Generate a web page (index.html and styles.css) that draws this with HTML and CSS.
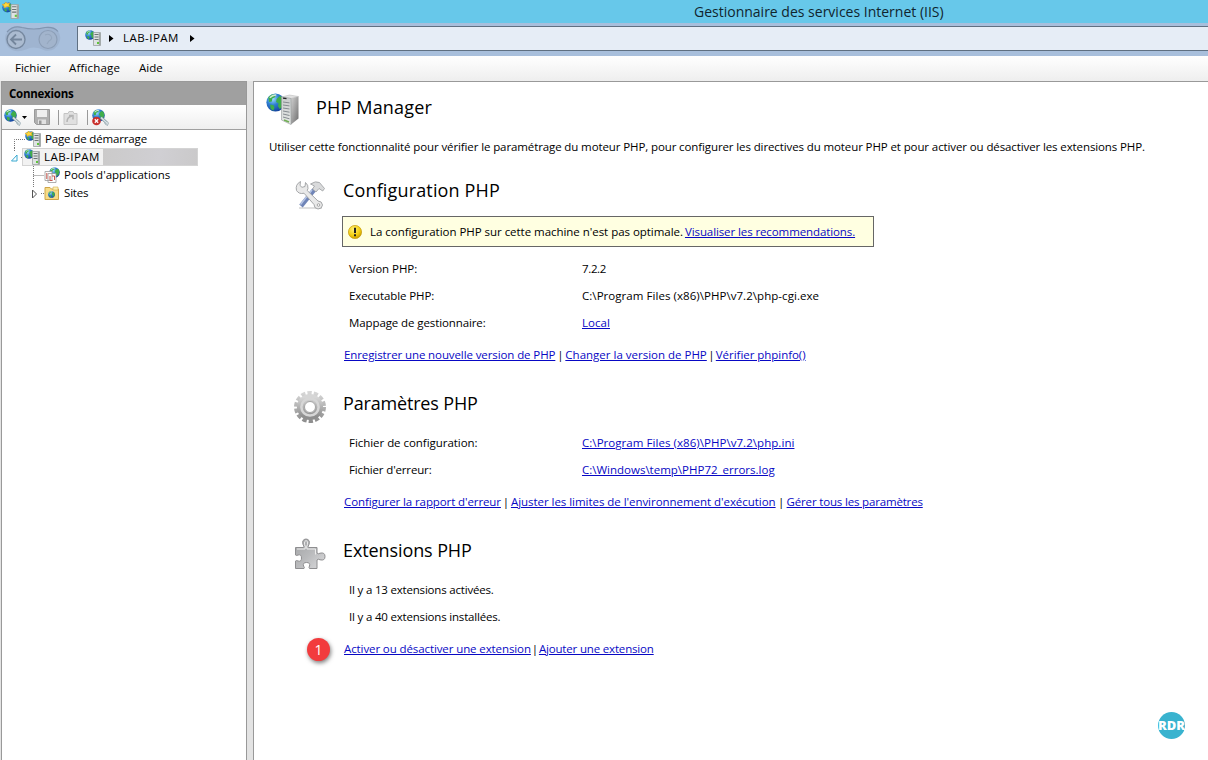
FILE: index.html
```html
<!DOCTYPE html>
<html lang="fr">
<head>
<meta charset="utf-8">
<title>Gestionnaire des services Internet (IIS)</title>
<link rel="stylesheet" href="styles.css">
</head>
<body>
<svg class="defs" width="0" height="0">
  <defs>
    <radialGradient id="globe" cx=".35" cy=".3" r=".75"><stop offset="0" stop-color="#9fe0ff"/><stop offset=".45" stop-color="#2f7fd0"/><stop offset="1" stop-color="#123f9a"/></radialGradient>
    <linearGradient id="front" x1="0" y1="0" x2="0" y2="1"><stop offset="0" stop-color="#c9cccd"/><stop offset="1" stop-color="#e6e8e6"/></linearGradient>
    <linearGradient id="side" x1="0" y1="0" x2="1" y2="1"><stop offset="0" stop-color="#d2d2d2"/><stop offset="1" stop-color="#6c6c6c"/></linearGradient>
    <linearGradient id="gearfill" x1="0" y1="0" x2="0" y2="1"><stop offset="0" stop-color="#d6d6d6"/><stop offset="1" stop-color="#8e8e8e"/></linearGradient>
    <linearGradient id="puzzle" x1="0" y1="0" x2="1" y2="1"><stop offset="0" stop-color="#a2a3a5"/><stop offset=".5" stop-color="#b9babc"/><stop offset="1" stop-color="#dcdcde"/></linearGradient>
    <radialGradient id="gold" cx=".4" cy=".3" r=".8"><stop offset="0" stop-color="#fff27a"/><stop offset=".6" stop-color="#f2cc0c"/><stop offset="1" stop-color="#b78a00"/></radialGradient>
    <symbol id="earth" viewBox="0 0 10 10">
      <circle cx="5" cy="5" r="4.8" fill="url(#globe)"/>
      <path d="M1.200 2.300 3 .8l2.200.1-.5 1.400-1.400.6-.2 1.600-1.500.3zM5.600 3.200l1.600-1.600 1.500.5.8 2-.6 2.600-1.600 1.800-1-1.500.3-1.600-1.300-.7zM2.200 6l1.800.4.5 1.300-.7 1.600-1.400-1.100z" fill="#3fae4a"/>
      <path d="M2 2.500Q3.400.9 5.400 1" stroke="#fff" stroke-width=".8" fill="none" opacity=".75"/>
    </symbol>
    <symbol id="server" viewBox="0 0 16 16">
      <use href="#earth" x="0" y="0" width="10" height="10"/>
      <path d="M8.500 2.500h7v13h-7z" fill="#dfe3e3" stroke="#9aa1a1" stroke-width=".8"/>
      <path d="M13.800 3h1.600v12.300h-1.600z" fill="#9fa5a5"/>
      <path d="M9.500 4.500h4M9.500 7h4M9.500 9.500h4" stroke="#6b7375"/>
      <path d="M12 12h2v2h-2z" fill="#5fc53b"/>
    </symbol>
    <symbol id="serverstar" viewBox="0 0 16 16">
      <use href="#server" width="16" height="16"/>
      <path d="M3.500 0 4.800 1.500 7.500.8 6.400 2.800 7.300 4.500 4.600 4.200 2 5.600 1.900 3.800 0 2.300 2.600 1.800z" fill="#ffd83a" stroke="#e39a1c" stroke-width=".5"/>
    </symbol>
    <symbol id="globeplug" viewBox="0 0 17 17">
      <use href="#earth" x="0" y="0" width="13" height="13"/>
      <path d="M9 8.500 15 14" stroke="#7d959f" stroke-width="3"/>
      <path d="M9 8.500 15 14" stroke="#dbe4e8" stroke-width="1.600"/>
      <path d="M12.500 14.500 15.500 16.500 16.500 13.500" fill="none" stroke="#9dafb6"/>
    </symbol>
  </defs>
</svg>

<header class="titlebar">
  <svg class="app-icon" width="17" height="17" viewBox="0 0 16 16"><use href="#serverstar"/></svg>
  <h1 class="window-title">Gestionnaire des services Internet (IIS)</h1>
</header>

<div class="navbar">
  <svg class="nav-buttons" width="62" height="29" viewBox="0 0 62 29">
    <path d="M6 6Q12-.5 21 2q11 4 22 0 9-1.500 13 4 4 6 1 12-4 9-14 7.500Q32 20 24 24.500 13 29 6 22 0 13 6 6z" fill="#9fb4d0"/>
    <path d="M5 7Q11 0 20 2.500q12 3 23 0 9-1 13 4" fill="none" stroke="#8195b0" stroke-width="1.200"/>
    <circle cx="14" cy="14.500" r="9" fill="#abbbd0" stroke="#76889f" stroke-width="1.400"/>
    <path d="M20 14.500H9.500M14 9.500l-5 5 5 5" fill="none" stroke="#74869c" stroke-width="1.800"/>
    <circle cx="46" cy="14.500" r="9" fill="#a2b4cc" stroke="#8c9eb6" stroke-width="1.200"/>
    <path d="M43 10q4-2 6 1t-2 5l-2 3" fill="none" stroke="#95a7be" stroke-width="1.100"/>
  </svg>
  <div class="address">
    <svg width="16" height="16" viewBox="0 0 16 16"><use href="#server"/></svg>
    <svg class="chev first" width="5" height="7" viewBox="0 0 5 7"><path d="M0 0l4.500 3.500L0 7z"/></svg>
    <span class="crumb wide">LAB-IPAM</span>
    <svg class="chev" width="5" height="7" viewBox="0 0 5 7"><path d="M0 0l4.500 3.500L0 7z"/></svg>
  </div>
</div>

<nav class="menubar">
  <span class="menu-file">Fichier</span><span class="menu-view">Affichage</span><span>Aide</span>
</nav>

<div class="workspace">
  <aside class="connections">
    <h2 class="pane-title">Connexions</h2>
    <div class="toolbar">
      <svg width="17" height="17" viewBox="0 0 17 17"><use href="#globeplug"/></svg>
      <svg class="drop" width="5" height="3" viewBox="0 0 5 3"><path d="M0 0h5L2.500 3z"/></svg>
      <svg class="save" width="16" height="16" viewBox="0 0 16 16"><path d="M.5.5h15v15H2.500l-2-2z" fill="#b0b0b0" stroke="#9a9a9a"/><path d="M3 1h10v7H3z" fill="#efefef"/><path d="M4 10.500h8V15H4z" fill="#e2e2e2"/><path d="M5 11.500h2.500V15H5z" fill="#999"/></svg>
      <i class="sep"></i>
      <svg width="15" height="15" viewBox="0 0 15 15"><path d="M1 3.500h4l1-2h4l1 2h3v11H1z" fill="#e0e0e0" stroke="#c4c4c4"/><path d="M4 12q0-5 5-6M6 5.500h4v4" fill="none" stroke="#b4b4b4" stroke-width="1.500"/></svg>
      <i class="sep second"></i>
      <svg width="17" height="17" viewBox="0 0 17 17"><use href="#globeplug"/><circle cx="4.500" cy="12" r="4.300" fill="#c9302c"/><path d="M2.800 10.300l3.400 3.400M6.200 10.300l-3.400 3.400" stroke="#fff" stroke-width="1.300"/></svg>
    </div>
    <div class="tree">
      <div class="node">
        <svg class="lines" width="23" height="18"><path d="M12.500 18V9.500H23" /></svg>
        <svg width="16" height="16" viewBox="0 0 16 16"><use href="#serverstar"/></svg>
        <span class="snug">Page de démarrage</span>
      </div>
      <div class="node">
        <svg class="lines" width="22" height="18"><path d="M12.500 0v3M19 9.500h3"/><path class="open" d="M15 7v6H9.500z"/></svg>
        <div class="selected">
          <svg width="16" height="16" viewBox="0 0 16 16"><use href="#server"/></svg>
          <span class="wide">LAB-IPAM</span><i class="redacted"></i>
        </div>
      </div>
      <div class="node">
        <svg class="lines" width="42" height="18"><path d="M31.500 0v18M31.500 9.500H42"/></svg>
        <svg width="16" height="16" viewBox="0 0 16 16"><use href="#earth" x="5" y="0" width="11" height="11"/><path d="M1 4.500h7v9H1zM4 6.500h8v9H4z" fill="#fff" stroke="#9a9a9a" stroke-width=".8"/><path d="M2.800 6v6M6 9v4.500h2.500M8 9h2.500v4" fill="none" stroke="#c8564e"/></svg>
        <span>Pools d'applications</span>
      </div>
      <div class="node">
        <svg class="lines" width="42" height="18"><path d="M31.500 0v3M39 9.500h3"/><path class="closed" d="M30.500 6v8l4-4z"/></svg>
        <svg width="16" height="16" viewBox="0 0 16 16"><path d="M1 2.500h5l1.500 1.500H14.500v10.500H1z" fill="#f7dc86" stroke="#cfa548"/><path d="M9 2h5v3H9z" fill="#fff1b0" stroke="#d1ab50" stroke-width=".6"/><use href="#earth" x="4" y="6" width="7" height="7"/></svg>
        <span class="tight">Sites</span>
      </div>
    </div>
  </aside>

  <main class="page">
    <div class="page-head">
      <svg width="34" height="34" viewBox="0 0 34 34">
        <use href="#earth" x="0" y="1" width="19" height="19"/>
        <path d="M25 6l7.500-1.500v22L25 32.500z" fill="url(#side)"/>
        <path d="M15.500 5l8-2 9 1.500L25 6.500z" fill="#e2e2e2" stroke="#b5b5b5" stroke-width=".5"/>
        <path d="M15.500 5l9.500 1.500v26l-9.500-4.500z" fill="url(#front)" stroke="#969a9c" stroke-width=".6"/>
        <path d="M17 6.200l3.500.5" stroke="#222" stroke-width="1.300"/>
        <path d="M17 10l6.500.9M17 13l6.500.9M17 16l6.500 1M17 19l6.500 1.200M17 22l6.500 1.500M17 25l6.500 1.800" stroke="#858b90"/>
        <path d="M18 28l5 2" stroke="#6fae52" stroke-width="1.400"/>
      </svg>
      <h2>PHP Manager</h2>
    </div>
    <p class="intro">Utiliser cette fonctionnalité pour vérifier le paramétrage du moteur PHP, pour configurer les directives du moteur PHP et pour activer ou désactiver les extensions PHP.</p>

    <section class="block">
      <svg class="block-icon" width="32" height="32" viewBox="0 0 32 32">
        <path d="M5 29h23" stroke="#e0e0e0" stroke-width="2"/>
        <path d="M7 27 20 11" stroke="#7085b8" stroke-width="4.500"/>
        <path d="M6.500 25.500 18 11" stroke="#b5c4e4" stroke-width="1.500"/>
        <path d="M16.500 5q5-3.500 9-1.500l5 6-1.800 2.500-3.700-2.500-3 3.500-3.500-3 2-3z" fill="#d9dadb" stroke="#9a9da0" stroke-width=".8"/>
        <path d="M6.500 2.500 6 6.500l2 1.800 3-.8.5-4q3 2.500 2.500 6l-.8 2L24 22q4 0 4.500 4-.5 4-4.500 4-4-.5-4-4.500L10 14.200q-5 1.300-7.500-2.700-1.500-6 4-9z" fill="#e9e9e9" stroke="#9c9ea0" stroke-width=".9"/>
        <circle cx="24.500" cy="26" r="1.300" fill="#fff" stroke="#888" stroke-width=".7"/>
      </svg>
      <div class="block-body">
        <h3>Configuration PHP</h3>
        <div class="notice">
          <svg width="14" height="14" viewBox="0 0 14 14"><circle cx="7" cy="7" r="6.600" fill="url(#gold)" stroke="#c59a09" stroke-width=".7"/><path d="M7 2.800v5.200M7 9.300v2" stroke="#222" stroke-width="2"/></svg>
          <span>La configuration PHP sur cette machine n'est pas optimale.</span>
          <a class="close">Visualiser les recommendations.</a>
        </div>
        <dl class="fields after-notice">
          <dt class="even">Version PHP:</dt><dd class="dense">7.2.2</dd>
          <dt class="close">Executable PHP:</dt><dd class="loose">C:\Program Files (x86)\PHP\v7.2\php-cgi.exe</dd>
          <dt class="close">Mappage de gestionnaire:</dt><dd><a class="loose">Local</a></dd>
        </dl>
        <div class="links"><a class="close">Enregistrer une nouvelle version de PHP</a><i>|</i><a>Changer la version de PHP</a><i class="slim">|</i><a class="even">Vérifier phpinfo()</a></div>
      </div>
    </section>

    <section class="block">
      <svg class="block-icon raised" width="32" height="32" viewBox="0 0 32 32">
        <circle cx="16" cy="16" r="14" fill="none" stroke="url(#gearfill)" stroke-width="4" stroke-dasharray="4.300 1.998"/>
        <circle cx="16" cy="16" r="9.300" fill="none" stroke="url(#gearfill)" stroke-width="7.600"/>
        <circle cx="16" cy="16" r="8.600" fill="none" stroke="#d6d6d6" stroke-width="2.500"/>
        <circle cx="16" cy="16" r="5.500" fill="#fff" stroke="#a2a2a2"/>
      </svg>
      <div class="block-body">
        <h3 class="tight">Paramètres PHP</h3>
        <dl class="fields">
          <dt class="even">Fichier de configuration:</dt><dd><a class="loose">C:\Program Files (x86)\PHP\v7.2\php.ini</a></dd>
          <dt class="snug">Fichier d'erreur:</dt><dd><a>C:\Windows\temp\PHP72_errors.log</a></dd>
        </dl>
        <div class="links"><a class="close">Configurer la rapport d'erreur</a><i>|</i><a class="even">Ajuster les limites de l'environnement d'exécution</a><i class="broad">|</i><a class="tight">Gérer tous les paramètres</a></div>
      </div>
    </section>

    <section class="block">
      <svg class="block-icon raised" width="32" height="32" viewBox="0 0 32 32">
        <path d="M1.500 9.500H9.500Q10.500 8.500 9 6.500 7.500 1.500 12 1q4.500.5 3 5.500-1.500 2-.5 3H23V15q1 1.500 3 .2 5-1.200 5 3.300t-5 3.300Q24 20.500 23 22v8.500H15.500q-1-1 0-2.500 1-3.500-3-3.500T9.500 28q1.500 1.500.5 2.500H1.500V23q1-1 2.500 0 3.500 1 3.500-3T4 17q-1.500 1-2.500 0z" fill="url(#puzzle)" stroke="#8e8e90"/>
        <path d="M3 11h8q1-2-.5-4.500-.5-3.500 1.500-4 2.500.5 1.500 4-1.500 2.500-.5 4.500h8.500v5.500" fill="none" stroke="#ededed"/>
      </svg>
      <div class="block-body">
        <h3 class="close">Extensions PHP</h3>
        <div class="facts">
          <p>Il y a 13 extensions activées.</p>
          <p>Il y a 40 extensions installées.</p>
        </div>
        <div class="links"><b class="step">1</b><a class="close">Activer ou désactiver une extension</a><i class="thin">|</i><a class="tight">Ajouter une extension</a></div>
      </div>
    </section>

    <div class="brand"><span>RDR</span></div>
  </main>
</div>
</body>
</html>
```
FILE: styles.css
```css
* { box-sizing: border-box; }
body {
  margin: 0;
  width: 1208px;
  height: 760px;
  overflow: hidden;
  display: flex;
  flex-direction: column;
  background: #e3e3e3;
  color: #000;
  font: 11.5px/18px "Open Sans", "Noto Sans", sans-serif;
  white-space: nowrap;
}
h1, h2, h3, p, dl, dd { margin: 0; font-weight: 400; }
i { font-style: normal; }
svg { flex: none; display: block; }
.defs { position: absolute; }

/* letter spacing steps */
.wide { letter-spacing: .46px; }
.loose { letter-spacing: .05px; }
.even { letter-spacing: -.04px; }
.close { letter-spacing: -.1px; }
.snug { letter-spacing: -.15px; }
.tight { letter-spacing: -.17px; }
.dense { letter-spacing: -.35px; }

.titlebar { height: 23px; background: #67c8ea; display: flex; align-items: center; padding-left: 2px; }
.app-icon { margin-top: -2px; }
.window-title { margin-left: 675px; font-size: 14px; line-height: 22px; color: #10252e; }

.navbar { height: 33px; background: #a8bfdc; display: flex; padding: 3px 0 5px 2px; }
.nav-buttons { margin-top: -1px; }
.address {
  flex: 1;
  margin-left: 13px;
  border: 1px solid #5f7082;
  border-right: 0;
  background: #e6edf6;
  display: flex;
  align-items: center;
  padding: 0 0 1px 7px;
}
.chev.first { margin: 0 9px 0 8px; }
.chev { margin-left: 11px; }
.crumb { line-height: 22px; }

.menubar { height: 25px; display: flex; padding: 3px 0 0 15px; background: linear-gradient(#fff, #eee); }
.menu-file { width: 54px; }
.menu-view { width: 70px; letter-spacing: .16px; }

.workspace { flex: 1; display: flex; min-height: 0; }
.connections {
  width: 246px;
  margin-left: 1px;
  border: 1px solid #999;
  border-bottom: 0;
  background: #fff;
  display: flex;
  flex-direction: column;
}
.pane-title { height: 23px; background: #a0a0a0; padding-left: 7px; font-size: 11.5px; line-height: 23px; font-weight: 700; letter-spacing: -.25px; }
.toolbar {
  height: 25px;
  border-bottom: 1px solid #a0a0a0;
  background: linear-gradient(#fff, #efefef);
  display: flex;
  align-items: center;
  padding-left: 2px;
}
.drop { margin-left: 1px; }
.save { margin-left: 7px; }
.sep { width: 1px; height: 15px; background: #999; margin: 0 4px 0 8px; }
.sep.second { margin: 0 4px 0 9px; }

.node { display: flex; align-items: center; height: 18px; }
.node > span, .selected > span { margin-left: 4px; }
.lines path { fill: none; stroke: #777; stroke-dasharray: 1 1; }
.lines .open { stroke: #39a9d0; stroke-dasharray: none; }
.lines .closed { stroke: #555; stroke-dasharray: none; }
.selected {
  display: flex;
  align-items: center;
  height: 18px;
  width: 176px;
  margin-left: -2px;
  padding-left: 1px;
  border: 1px solid #d4d4d4;
  background: #f2f2f2;
}
.redacted { height: 16px; flex: 1; margin-left: 3px; background: linear-gradient(100deg, #cbcaca, #d0cfd3 60%, #cac9ca); }

.page {
  flex: 1;
  margin-left: 6px;
  position: relative;
  background: #fff;
  border-top: 1px solid #999;
  border-left: 1px solid #999;
  padding: 10px 0 0 12px;
}
.page-head { display: flex; height: 36px; align-items: flex-start; }
.page-head h2 { margin-left: 16px; }
.page-head h2, .block h3 { font-size: 18px; line-height: 30px; }
.page-head h2 { letter-spacing: .17px; }
.intro { margin: 10px 0 0 3px; letter-spacing: -.109px; }

.block { display: flex; margin: 0 0 25px 28px; }
.intro + .block { margin-top: 20px; }
.block-icon { margin: 3px 17px 0 0; }
.block-icon.raised { margin-top: 2px; }
.block h3 { line-height: 28px; height: 28px; }
.intro + .block h3 { letter-spacing: .15px; }
.block-body { display: flex; flex-direction: column; align-items: flex-start; }
.notice {
  width: 532px;
  height: 31px;
  margin: 12px 0 8px -1px;
  border: 1px solid #666;
  background: #ffffe1;
  display: flex;
  align-items: center;
  padding-left: 5px;
}
.notice span { margin: 0 2px 0 8px; }
.notice span { letter-spacing: -.035px; }
a { color: #0808c4; text-decoration: underline; text-underline-offset: 1px; text-decoration-thickness: 1px; }
.fields { display: grid; grid-template-columns: 233px auto; grid-auto-rows: 27px; line-height: 27px; margin: 12px 0 0 6px; }
.fields.after-notice { margin-top: 0; }
.facts { margin: 12px 0 0 6px; letter-spacing: -.19px; line-height: 27px; }
.links { display: flex; margin: 10px 0 0 1px; position: relative; }
.links i { width: 10px; text-align: center; }
.links .slim { width: 9px; }
.links .thin { width: 8px; }
.links .broad { width: 11px; }

.step {
  position: absolute;
  left: -37px;
  top: -2px;
  width: 23px;
  height: 23px;
  border-radius: 50%;
  background: #f23b3d;
  color: #fff;
  font: 400 14px/23px "Open Sans", sans-serif;
  text-align: center;
  box-shadow: 1px 2px 4px rgba(0, 0, 0, .5);
}
.brand {
  position: absolute;
  left: 904px;
  top: 630px;
  width: 27px;
  height: 27px;
  border-radius: 50%;
  background: #39b3cf;
  color: #fff;
  display: flex;
  justify-content: center;
  font: 800 13px/26px "Open Sans", sans-serif;
}
```
